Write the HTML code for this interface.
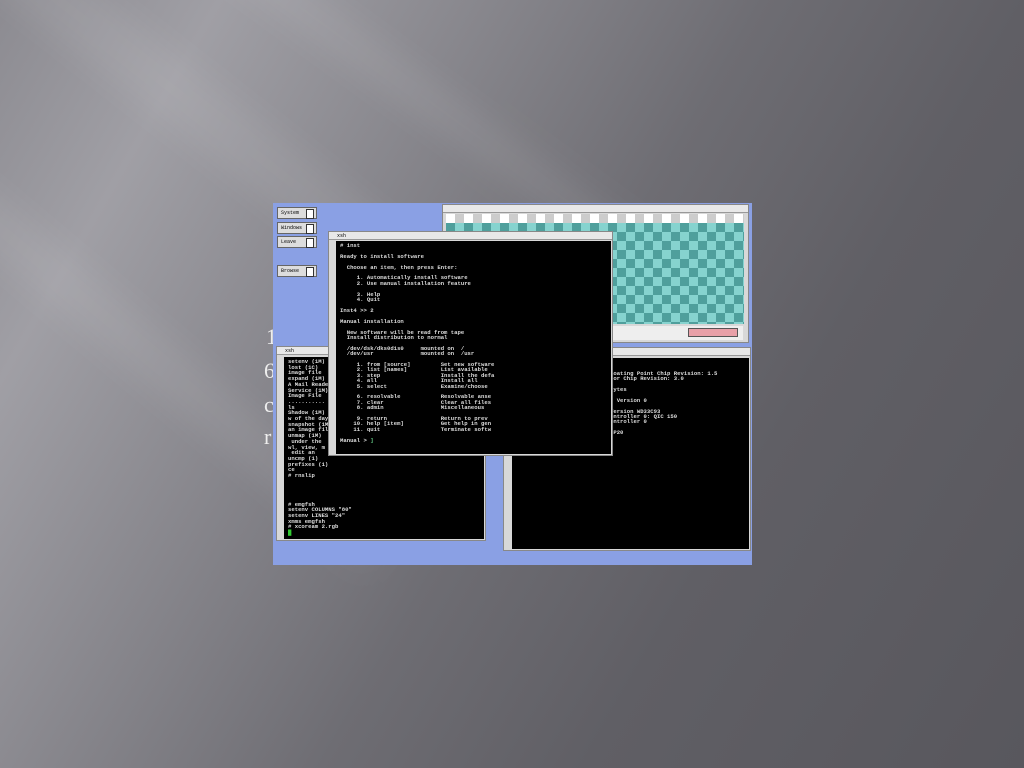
<!DOCTYPE html>
<html><head><meta charset="utf-8"><style>
*{margin:0;padding:0;box-sizing:border-box}
body{width:1024px;height:768px;overflow:hidden;position:relative;font-family:"Liberation Mono",monospace;
background:linear-gradient(120deg,#8c8b91 0%,#a09fa5 15%,#85848a 35%,#6e6d73 52%,#605f65 70%,#58575d 100%)}
.s{position:absolute;background:rgba(255,255,255,.07);filter:blur(14px)}
.a{position:absolute}
.t{position:absolute;background:#000;color:#ddd;font-size:5.6px;font-weight:bold;line-height:5.4px;white-space:pre;overflow:hidden;padding:2px 4px}
.w{position:absolute;background:#d8d8d8;border:1px solid #888}
.tb{position:absolute;left:0;right:0;top:0;height:8px;background:#e8e8e8;border-bottom:1px solid #999;font-size:5px;color:#000;padding-left:8px;line-height:8px}
.btn{position:absolute;width:40px;height:12px;background:#ddd;border:1px solid #666;font-size:5px;line-height:10px;padding-left:3px;color:#000}
.btn:after{content:"";position:absolute;right:2px;top:1px;width:6px;height:8px;border:1px solid #333;background:#fff}
.bg-text{position:absolute;color:#eee;font-family:"Liberation Serif",serif;font-size:22px}
</style></head><body>
<div class="s" style="left:-100px;top:120px;width:700px;height:60px;transform:rotate(38deg)"></div>
<div class="s" style="left:-150px;top:330px;width:600px;height:50px;transform:rotate(40deg)"></div>
<div class="s" style="left:100px;top:60px;width:600px;height:40px;transform:rotate(36deg)"></div>
<div class="bg-text" style="left:266px;top:324px">1</div>
<div class="bg-text" style="left:264px;top:358px">6</div>
<div class="bg-text" style="left:264px;top:392px">c</div>
<div class="bg-text" style="left:264px;top:424px">r</div>

<div class="a" style="left:273px;top:203px;width:479px;height:362px;background:#8aa0e4"></div>
<div class="btn" style="left:277px;top:207px">System</div>
<div class="btn" style="left:277px;top:222px">Windows</div>
<div class="btn" style="left:277px;top:236px">Leave</div>
<div class="btn" style="left:277px;top:265px">Browse</div>

<div class="w" style="left:442px;top:204px;width:307px;height:139px">
 <div class="tb"></div>
 <div class="a" style="left:3px;top:9px;width:298px;height:110px;background:repeating-conic-gradient(#4f9f9c 0 25%,#86d3cf 0 50%) 0 0/18px 18px"></div>
 <div class="a" style="left:3px;top:9px;width:298px;height:9px;background:repeating-conic-gradient(#ccc 0 25%,#fff 0 50%) 0 0/18px 18px"></div>
 <div class="a" style="left:170px;top:121px;width:130px;height:14px;background:#eee"></div>
 <div class="a" style="left:245px;top:123px;width:50px;height:9px;background:#e8a0a8;border:1px solid #555"></div>
</div>

<div class="w" style="left:276px;top:346px;width:210px;height:195px">
 <div class="tb">xsh</div>
 <div class="t" style="left:7px;top:10px;width:200px;height:182px;line-height:5.7px">setenv (1M)
lost (1C)
image file
expand (1M)
A Mail Reader
Service (1M)
Image File
...........
ls
Shadow (1M)
w of the day
snapshot (1M)
an image fil
unmap (1M)
 under the
wl, view, m
 edit an
uncmp (1)
prefixes (1)
ce
# rnslip




# emgfsh
setenv COLUMNS "80"
setenv LINES "24"
xmms emgfsh
# xcoream 2.rgb
<span style="color:#3c3">█</span></div>
</div>

<div class="w" style="left:503px;top:347px;width:248px;height:204px">
 <div class="tb">xsh</div>
 <div class="t" style="left:8px;top:10px;width:237px;height:191px"># hinv
1 33 MHZ IP20 Processor
FPU: MIPS R4000/R4010 VLSI Floating Point Chip Revision: 1.5
CPU: MIPS R4000/R4400 Processor Chip Revision: 3.0
Data cache size: 8 Kbytes
Instruction cache size: 16 Kbytes
Main memory size: 32 Mbytes
Integral Ethernet controller: Version 0
Graphics board: GR1.2
Integral SCSI controller 0: Version WD33C93
Tape drive: unit 5 on SCSI controller 0: QIC 150
Disk drive: unit 1 on SCSI controller 0
# uname -a
# system release 4.0 060114 IP20
#</div>
</div>

<div class="w" style="left:328px;top:231px;width:285px;height:225px">
 <div class="tb">xsh</div>
 <div class="t" style="left:7px;top:9px;width:275px;height:213px"># inst

Ready to install software

  Choose an item, then press Enter:

     1. Automatically install software
     2. Use manual installation feature

     3. Help
     4. Quit

Inst4 >> 2

Manual installation

  New software will be read from tape
  Install distribution to normal

  /dev/dsk/dks0d1s0     mounted on  /
  /dev/usr              mounted on  /usr

     1. from [source]         Set new software
     2. list [names]          List available
     3. step                  Install the defa
     4. all                   Install all
     5. select                Examine/choose

     6. resolvable            Resolvable anse
     7. clear                 Clear all files
     8. admin                 Miscellaneous

     9. return                Return to prev
    10. help [item]           Get help in gen
    11. quit                  Terminate softw

Manual > <span style="color:#6c8">]</span></div>
</div>
</body></html>
